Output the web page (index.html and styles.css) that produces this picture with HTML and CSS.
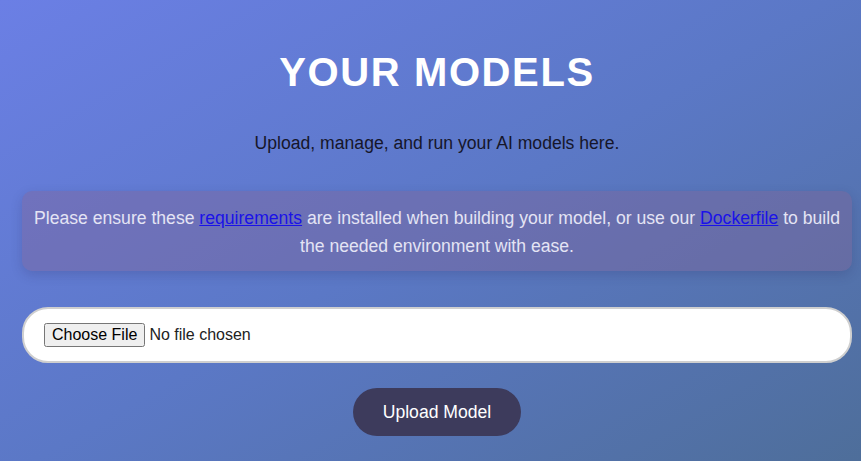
FILE: index.html
```html
<!DOCTYPE html>
<html>
<head>
<meta charset="utf-8">
<link rel="stylesheet" href="styles.css">
</head>
<body>
<main class="page">
  <h1 class="title">YOUR MODELS</h1>
  <p class="subtitle">Upload, manage, and run your AI models here.</p>
  <div class="notice">Please ensure these <a href="#">requirements</a> are installed when building your model, or use our <a href="#">Dockerfile</a> to build the needed environment with ease.</div>
  <form class="upload">
    <div class="file-field"><input type="file" class="file-input"></div>
    <button type="button" class="upload-btn">Upload Model</button>
  </form>
</main>
</body>
</html>
```
FILE: styles.css
```css
html, body {
  margin: 0;
  height: 100%;
}
body {
  background: linear-gradient(150deg, #6b7fe5 0%, #5b78c6 50%, #4e6e9a 100%);
  font-family: "Liberation Sans", Arial, sans-serif;
  overflow: hidden;
}
.page {
  padding: 49px 9px 0 22px;
  display: flex;
  flex-direction: column;
  align-items: stretch;
}
.title {
  margin: 0;
  text-align: center;
  color: #fff;
  font-size: 40px;
  font-weight: bold;
  letter-spacing: 1.6px;
  line-height: 46px;
}
.subtitle {
  margin: 38px 0 0;
  text-align: center;
  color: #16162a;
  font-size: 17.6px;
  line-height: 21px;
}
.notice {
  margin-top: 37px;
  padding: 13px 12px 11px;
  background: rgba(130, 100, 150, 0.4);
  border-radius: 10px;
  box-shadow: 0 4px 12px rgba(40, 40, 90, 0.2);
  color: #e4e4f4;
  font-size: 17.6px;
  line-height: 28px;
  text-align: center;
}
.notice a {
  color: #1a12e8;
}
.upload {
  margin-top: 36px;
  display: flex;
  flex-direction: column;
  align-items: center;
}
.file-field {
  align-self: stretch;
  box-sizing: border-box;
  height: 56px;
  background: #fff;
  border: 2px solid #cfcfcf;
  border-radius: 26px;
  padding: 0 20px;
  display: flex;
  align-items: center;
}
.file-input {
  font-family: "Liberation Sans", Arial, sans-serif;
  font-size: 16px;
  color: #222;
}
.upload-btn {
  margin-top: 25px;
  width: 168px;
  height: 48px;
  border: none;
  border-radius: 24px;
  background: #3d3b5c;
  color: #fff;
  font-family: "Liberation Sans", Arial, sans-serif;
  font-size: 17.6px;
}
```
